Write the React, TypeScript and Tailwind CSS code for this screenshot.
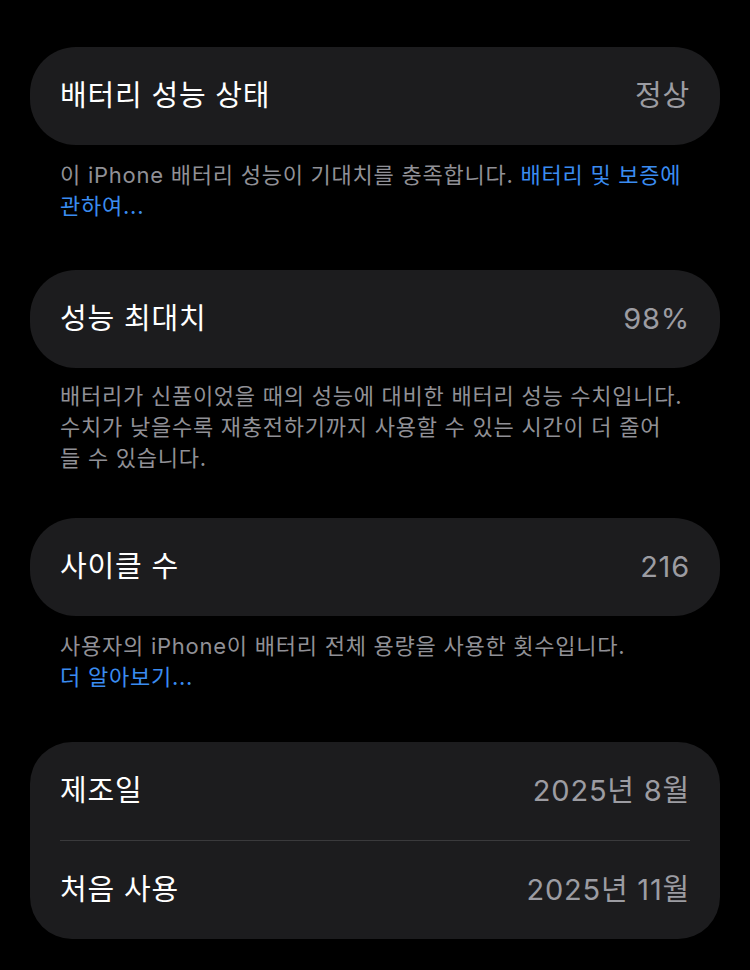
import React from "react";

const font = { fontFamily: '"Inter", "Noto Sans CJK KR", sans-serif' };

function Row({ label, value }: { label: string; value: string }) {
  return (
    <div className="flex h-[98px] items-center justify-between px-[30px]">
      <span className="text-[29px] tracking-[0.8px] text-white">{label}</span>
      <span className="text-[29px] tracking-[0.8px] text-[#9c9ca2]">{value}</span>
    </div>
  );
}

export default function App() {
  return (
    <div
      className="min-h-[970px] w-[750px] bg-black px-[30px] pt-[47px] antialiased"
      style={font}
    >
      <div className="rounded-[46px] bg-[#1c1c1e]">
        <Row label="배터리 성능 상태" value="정상" />
      </div>
      <p className="mt-[15px] px-[30px] text-[22px] leading-[31px] tracking-[0.75px] text-[#909096]">
        이 iPhone 배터리 성능이 기대치를 충족합니다.{" "}
        <span className="text-[#3a8cf0]">배터리 및 보증에</span>
        <br />
        <span className="text-[#3a8cf0]">관하여...</span>
      </p>

      <div className="mt-[48px] rounded-[46px] bg-[#1c1c1e]">
        <Row label="성능 최대치" value="98%" />
      </div>
      <p className="mt-[13px] px-[30px] text-[22px] leading-[31px] tracking-[0.75px] text-[#909096]">
        배터리가 신품이었을 때의 성능에 대비한 배터리 성능 수치입니다.
        <br />
        수치가 낮을수록 재충전하기까지 사용할 수 있는 시간이 더 줄어
        <br />
        들 수 있습니다.
      </p>

      <div className="mt-[44px] rounded-[46px] bg-[#1c1c1e]">
        <Row label="사이클 수" value="216" />
      </div>
      <p className="mt-[15px] px-[30px] text-[22px] leading-[31px] tracking-[0.75px] text-[#909096]">
        사용자의 iPhone이 배터리 전체 용량을 사용한 횟수입니다.
        <br />
        <span className="text-[#3a8cf0]">더 알아보기...</span>
      </p>

      <div className="mt-[49px] rounded-[42px] bg-[#1c1c1e]">
        <Row label="제조일" value="2025년 8월" />
        <div className="mx-[30px] h-px bg-[#3a3a3c]" />
        <Row label="처음 사용" value="2025년 11월" />
      </div>
    </div>
  );
}
